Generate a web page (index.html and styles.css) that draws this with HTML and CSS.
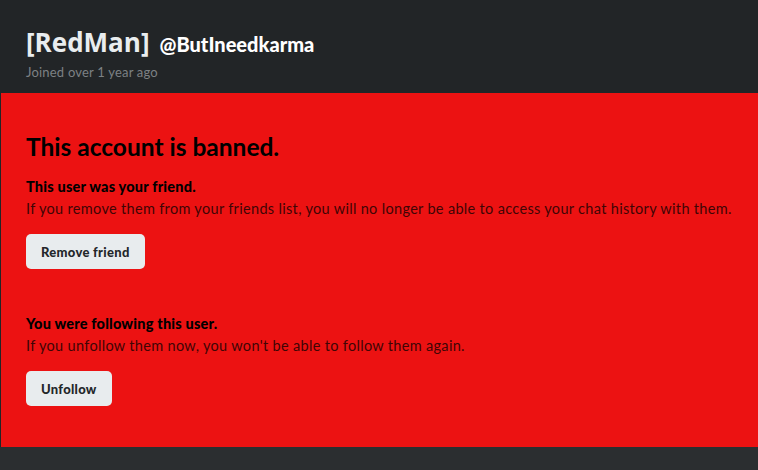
FILE: index.html
```html
<!DOCTYPE html>
<html>
<head>
<meta charset="utf-8">
<link rel="stylesheet" href="styles.css">
</head>
<body>
<header class="profile-head">
  <div class="names">
    <h1 class="display-name">[RedMan]</h1>
    <span class="handle">@ButIneedkarma</span>
  </div>
  <div class="joined">Joined over 1 year ago</div>
</header>
<main class="banned">
  <h2 class="banned-title">This account is banned.</h2>
  <section class="notice">
    <div class="notice-title">This user was your friend.</div>
    <p class="notice-text">If you remove them from your friends list, you will no longer be able to access your chat history with them.</p>
    <button class="btn">Remove friend</button>
  </section>
  <section class="notice second">
    <div class="notice-title">You were following this user.</div>
    <p class="notice-text">If you unfollow them now, you won't be able to follow them again.</p>
    <button class="btn">Unfollow</button>
  </section>
</main>
<div class="footer-strip"></div>
</body>
</html>
```
FILE: styles.css
```css
html, body {
  margin: 0;
  padding: 0;
}
body {
  width: 758px;
  height: 470px;
  overflow: hidden;
  background: #2b2e30;
  font-family: "Lato", "Open Sans", sans-serif;
}
.profile-head {
  background: #222527;
  height: 93px;
  box-sizing: border-box;
  padding: 25px 26px 0 26px;
}
.names {
  display: flex;
  align-items: baseline;
  gap: 10px;
}
.display-name {
  margin: 0;
  font-family: "Open Sans", sans-serif;
  font-size: 26px;
  font-weight: 700;
  color: #e9edef;
  line-height: 34px;
}
.handle {
  font-family: "Lato", sans-serif;
  font-weight: 900;
  font-size: 20px;
  color: #ffffff;
}
.joined {
  margin-top: 5px;
  font-size: 13px;
  letter-spacing: 0.2px;
  color: #7d8184;
}
.banned {
  background: #ec1212;
  height: 354px;
  box-sizing: border-box;
  padding: 39px 25px 0 25px;
  border-left: 1px solid #222527;
  color: #000;
}
.banned-title {
  margin: 0 0 15px 0;
  font-size: 24.5px;
  font-weight: 700;
  line-height: 30px;
}
.notice-title {
  font-weight: 900;
  font-size: 14.5px;
  line-height: 20px;
  letter-spacing: 0.2px;
}
.notice-text {
  margin: 2px 0 15px 0;
  font-size: 14.5px;
  line-height: 20px;
  letter-spacing: 0.32px;
  color: #3f0505;
}
.btn {
  display: block;
  height: 35px;
  padding: 0 15px;
  border: none;
  border-radius: 5px;
  background: #e8ecee;
  color: #23272a;
  font-family: "Lato", sans-serif;
  font-weight: 900;
  font-size: 13px;
  letter-spacing: 0.3px;
}
.second {
  margin-top: 45px;
}
.footer-strip {
  height: 23px;
}
```
